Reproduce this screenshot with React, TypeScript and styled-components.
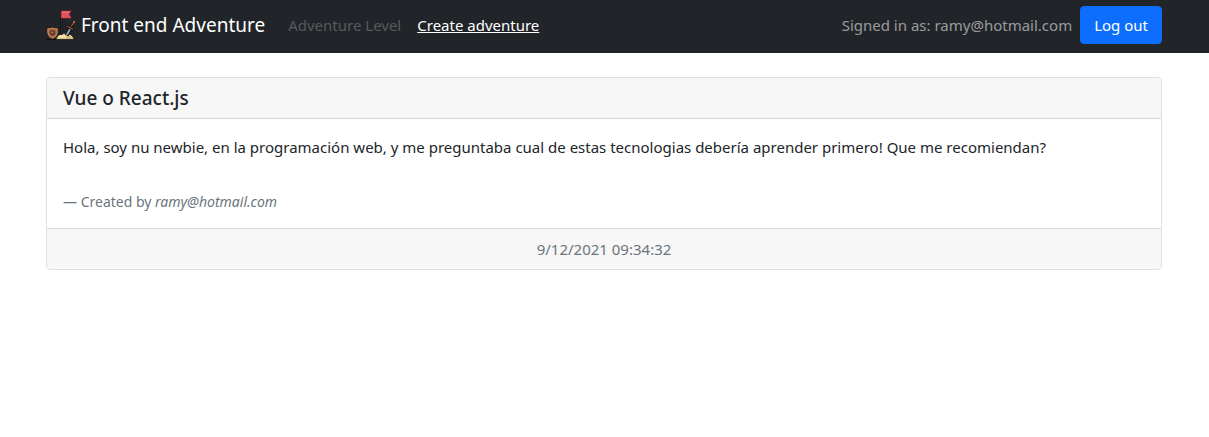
import React from "react";
import styled, { createGlobalStyle } from "styled-components";

const GlobalStyle = createGlobalStyle`
  *, *::before, *::after { box-sizing: border-box; }
  body {
    margin: 0;
    background: #fff;
    color: #212529;
    font-family: "Segoe UI", "Noto Sans", "Open Sans", sans-serif;
    font-size: 15px;
    line-height: 24px;
  }
`;

const Container = styled.div`
  width: 100%;
  max-width: 1141px;
  margin: 0 auto;
  padding: 0 13px 0 12px;
`;

const Navbar = styled.header`
  background: #212529;
  padding: 6px 0 9px;
`;

const NavRow = styled(Container)`
  display: flex;
  align-items: center;
`;

const Brand = styled.a`
  display: flex;
  align-items: center;
  gap: 5px;
  margin-right: 15px;
  color: #fff;
  font-size: 19px;
  line-height: 30px;
  text-decoration: none;
  white-space: nowrap;
`;

const Nav = styled.nav`
  display: flex;
  flex: 1;
`;

const NavLink = styled.a<{ $muted?: boolean }>`
  padding: 0 8px;
  white-space: nowrap;
  color: ${(p) => (p.$muted ? "rgba(255, 255, 255, 0.25)" : "#fff")};
  text-decoration: ${(p) => (p.$muted ? "none" : "underline")};
`;

const SignedIn = styled.span`
  margin-right: 8px;
  color: rgba(255, 255, 255, 0.55);
  white-space: nowrap;
`;

const Button = styled.button`
  padding: 6px 13px;
  border: 1px solid #0d6efd;
  border-radius: 4px;
  background: #0d6efd;
  color: #fff;
  font: inherit;
  white-space: nowrap;
  cursor: pointer;
`;

const Main = styled(Container)`
  padding-top: 24px;
`;

const Card = styled.article`
  border: 1px solid #dfdfdf;
  border-radius: 4px;
  overflow: hidden;
`;

const CardHeader = styled.h5`
  margin: 0;
  padding: 8px 16px;
  background: #f7f7f7;
  border-bottom: 1px solid #d8d8d8;
  font-size: 19px;
  font-weight: 500;
  line-height: 24px;
`;

const Quote = styled.blockquote`
  margin: 0;
  padding: 16px;
`;

const QuoteText = styled.p`
  margin: 0 0 32px;
`;

const QuoteSource = styled.footer`
  color: #6c757d;
  font-size: 14px;
  line-height: 21px;
`;

const CardFooter = styled.footer`
  padding: 8px 16px;
  background: #f7f7f7;
  border-top: 1px solid #d8d8d8;
  color: #6c757d;
  text-align: center;
`;

const Logo = () => (
  <svg width="30" height="30" viewBox="0 0 30 30" aria-hidden="true">
    <path d="M1 29.5h27" stroke="#0c0d0f" strokeWidth="1" />
    <path d="M10 29.2Q12 23.6 19 23.6T28 29.2Z" fill="#f6dfa4" stroke="#11100f" strokeWidth=".5" />
    <path d="M21 25q4 1 5 4h-6z" fill="#d8b979" />
    <path d="M15.5 0v25" stroke="#08090b" strokeWidth="2" />
    <path d="M15.7 9v15" stroke="#50545d" strokeWidth=".6" />
    <path d="M14.8.5H26L23.4 4.3 26 8.5H14.8Z" fill="#dc4f5c" stroke="#28171b" strokeWidth=".6" />
    <path d="M16 2.5h7" stroke="#ee6872" strokeWidth="1.5" />
    <path d="M.9 17.7Q4 18.3 6.5 17 9 18.3 12.1 17.7V22.5Q11.9 27.2 6.5 29.2 1.1 27.2.9 22.5Z" fill="#9b6545" stroke="#1b1210" strokeWidth=".6" />
    <path d="M2 19Q4.5 19.3 6.5 18.3 8.5 19.3 11 19V22.5Q10.8 26.2 6.5 28 2.2 26.2 2 22.5Z" fill="none" stroke="#c68a55" strokeWidth="1" />
    <circle cx="6.5" cy="22.7" r="2.3" fill="#764333" stroke="#402821" strokeWidth=".7" />
    <circle cx="6.2" cy="22.3" r=".9" fill="#c9895a" />
    <path d="M25 17 20.5 25.5" stroke="#0a0d12" strokeWidth="4" />
    <path d="M24.5 18 20.7 25" stroke="#72879b" strokeWidth="2.2" />
    <path d="M24.8 18 21.2 24.5" stroke="#b1c0cd" strokeWidth=".7" />
    <path d="M20.5 16 27.5 19.5M24.7 17 28 12.5" stroke="#130f0e" strokeWidth="2.6" />
    <path d="M21 16.3 27 19.2M25 16.5 27.7 12.8" stroke="#a45f3c" strokeWidth="1.2" />
    <circle cx="28" cy="12.2" r="1.1" fill="#c17a48" />
  </svg>
);

export default function App() {
  return (
    <>
      <GlobalStyle />
      <Navbar>
        <NavRow>
          <Brand href="#">
            <Logo />
            Front end Adventure
          </Brand>
          <Nav>
            <NavLink href="#level" $muted aria-disabled="true">
              Adventure Level
            </NavLink>
            <NavLink href="#create">Create adventure</NavLink>
          </Nav>
          <SignedIn>Signed in as: ramy@hotmail.com</SignedIn>
          <Button type="button">Log out</Button>
        </NavRow>
      </Navbar>
      <Main as="main">
        <Card>
          <CardHeader>Vue o React.js</CardHeader>
          <Quote>
            <QuoteText>
              Hola, soy nu newbie, en la programación web, y me preguntaba cual de estas tecnologias
              debería aprender primero! Que me recomiendan?
            </QuoteText>
            <QuoteSource>
              — Created by <cite>ramy@hotmail.com</cite>
            </QuoteSource>
          </Quote>
          <CardFooter>9/12/2021 09:34:32</CardFooter>
        </Card>
      </Main>
    </>
  );
}
